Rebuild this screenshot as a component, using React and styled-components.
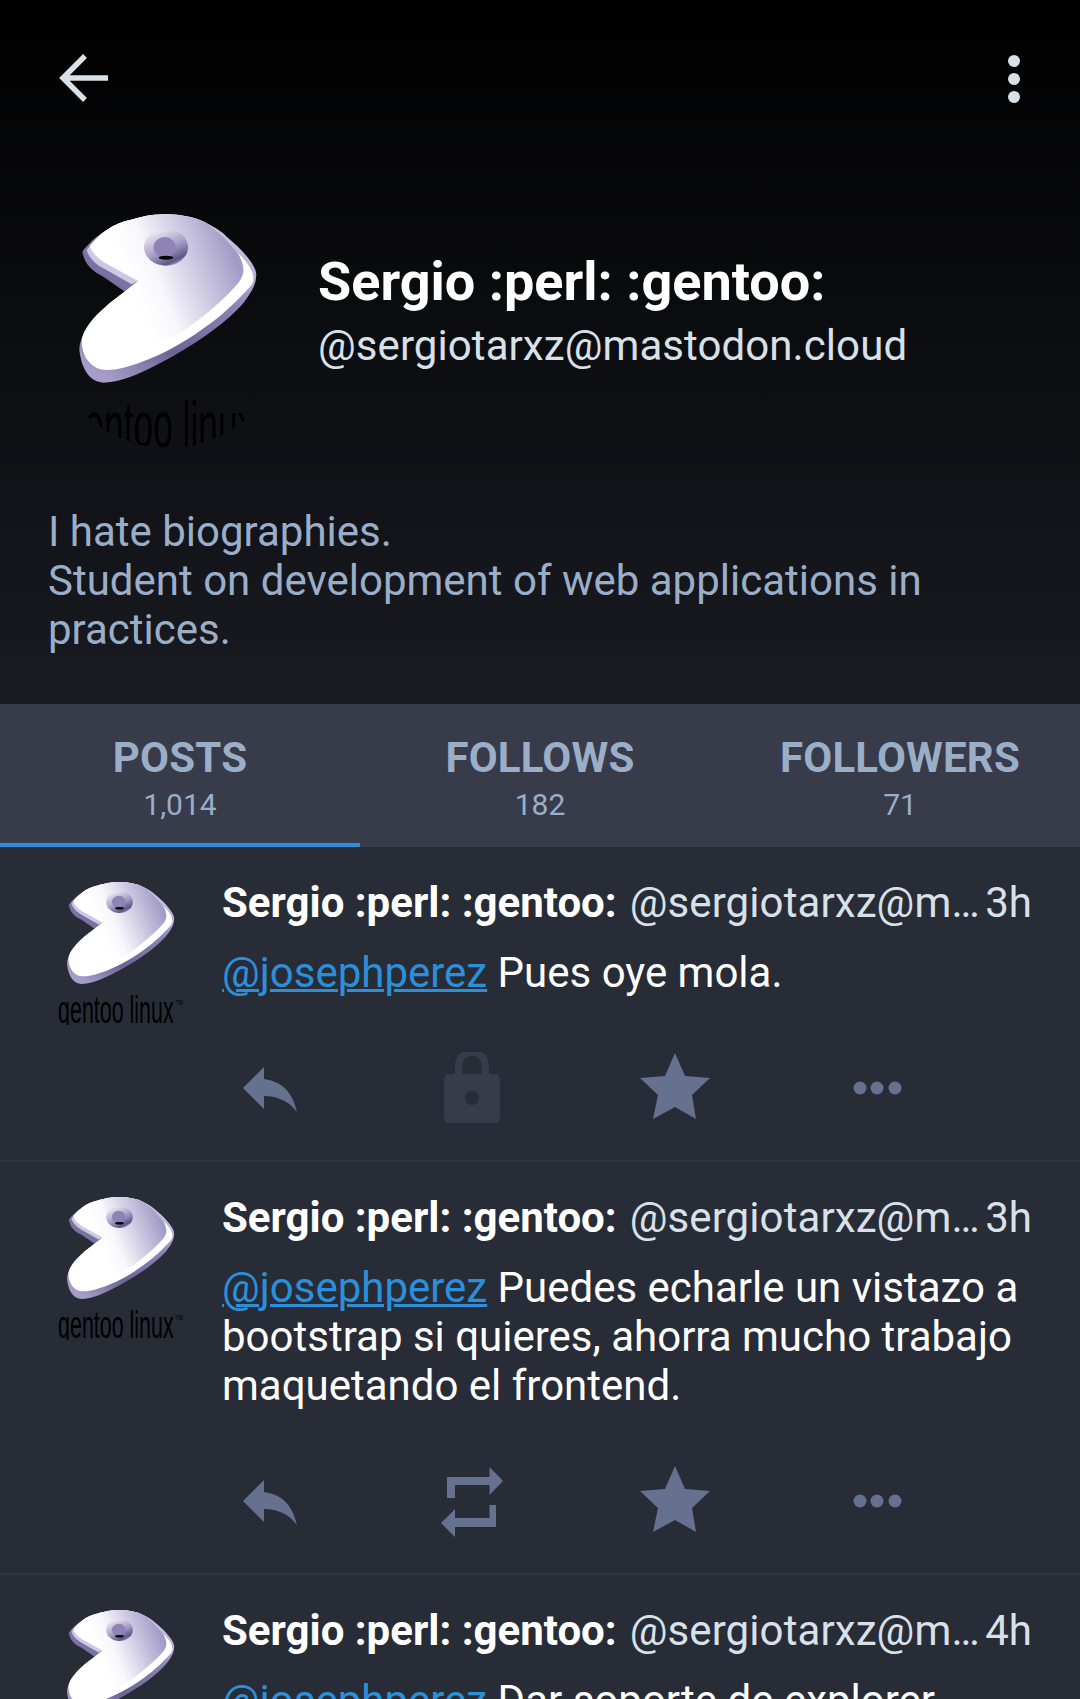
import React from 'react';
import styled, { createGlobalStyle } from 'styled-components';

const Global = createGlobalStyle`
  html, body { margin: 0; padding: 0; background: #282c37; }
  * { box-sizing: border-box; }
  #root { width: 1080px; height: 1699px; overflow: hidden; font-family: Roboto, "Liberation Sans", sans-serif; }
`;

const Page = styled.div`width: 1080px; height: 1699px; overflow: hidden; background: #282c37;`;
const Header = styled.header`
  height: 704px; padding: 0 48px;
  background: linear-gradient(180deg, #000 0%, #191b22 100%);
`;
const TopBar = styled.div`
  height: 208px; padding-top: 48px; display: flex; justify-content: space-between; align-items: flex-start;
`;
const Identity = styled.div`display: flex; align-items: center; gap: 30px;`;
const Names = styled.div`display: flex; flex-direction: column; padding-bottom: 37px;`;
const HeroName = styled.div`font-size: 54px; font-weight: 700; color: #fff; line-height: 63px;`;
const HeroHandle = styled.div`font-size: 42px; color: #d9e1e8; line-height: 49px; margin-top: 8px; letter-spacing: 0.08px;`;
const Bio = styled.p`margin: 59px 0 0; font-size: 42px; line-height: 49px; color: #9baec8;`;

const AvatarBox = styled.div`
  flex: none; width: ${p => p.$size}px; height: ${p => p.$size}px; overflow: hidden;
  border-radius: ${p => (p.$round ? '50%' : '0')};
  margin-top: ${p => (p.$round ? '0' : '3px')};
  svg { display: block; width: 100%; height: 100%; }
`;

const Tabs = styled.nav`display: grid; grid-template-columns: repeat(3, 360px); background: #373b4a; height: 143px;`;
const Tab = styled.div`
  display: flex; flex-direction: column; align-items: center; padding-top: 29px;
  border-bottom: 4px solid ${p => (p.$active ? '#2b90d9' : 'transparent')};
`;
const TabLabel = styled.div`font-size: 42px; font-weight: 700; line-height: 49px; color: #9baec8; letter-spacing: 0.2px;`;
const TabCount = styled.div`font-size: 30px; line-height: 35px; color: #9baec8; margin-top: 5px;`;

const Status = styled.article`
  display: flex; gap: 30px; padding: 31px 48px 36px; border-bottom: 2px solid #313543;
`;
const Body = styled.div`flex: 1; min-width: 0;`;
const NameRow = styled.div`display: flex; font-size: 42px; line-height: 49px; white-space: nowrap;`;
const DisplayName = styled.span`font-weight: 700; color: #fff; flex: none; margin-right: 13px;`;
const Handle = styled.span`flex: 1; min-width: 0; overflow: hidden; text-overflow: ellipsis; color: #d9e1e8; letter-spacing: 0.1px;`;
const Time = styled.span`flex: none; color: #d9e1e8;`;
const Text = styled.p`margin: 21px 0 0; font-size: 42px; line-height: 49px; color: #fff;`;
const Mention = styled.a`color: #2b90d9; text-decoration: underline; text-decoration-thickness: 3px;`;
const Actions = styled.div`display: flex; gap: 94.6px; margin: 55px 0 0 -6.5px;`;
const IconSlot = styled.svg`display: block; flex: none; width: 108px; height: 72px; fill: ${p => p.$color || '#667190'};`;

const faceTop = 'M265 273 L160 215 C140 202 125 185 120 167 C150 130 190 100 240 90 C270 82 300 73 345 73 C390 72 430 82 450 90 C490 105 530 150 560 185';

const GentooLogo = ({ id, view }) => (
  <svg viewBox={view}>
    <defs>
      <linearGradient id={`${id}-d`} x1="0.8" y1="0.1" x2="0.2" y2="1">
        <stop offset="0" stopColor="#c9c4e0" />
        <stop offset="0.3" stopColor="#8c83b4" />
        <stop offset="0.7" stopColor="#6c6494" />
        <stop offset="1" stopColor="#a59dc8" />
      </linearGradient>
      <linearGradient id={`${id}-f`} x1="0.3" y1="0.55" x2="0.95" y2="0.3">
        <stop offset="0" stopColor="#fff" />
        <stop offset="0.25" stopColor="#f8f7fc" />
        <stop offset="1" stopColor="#a39bc7" />
      </linearGradient>
      <linearGradient id={`${id}-h`} x1="0.2" y1="0" x2="0.8" y2="1">
        <stop offset="0" stopColor="#f4f2fa" />
        <stop offset="0.55" stopColor="#a39bc6" />
        <stop offset="0.85" stopColor="#5f5788" />
        <stop offset="1" stopColor="#c9c4e0" />
      </linearGradient>
    </defs>
    <path fill={`url(#${id}-d)`} d="M225 305 L160 260 C125 242 105 225 97 185 C130 140 190 100 240 90 C270 82 300 73 345 73 C390 72 430 85 470 100 C500 115 515 125 530 140 C555 160 580 185 595 205 C612 228 622 245 618 262 C618 285 600 315 575 345 C520 405 430 470 300 535 C250 560 200 578 160 578 C120 575 95 540 88 480 C88 440 120 395 175 343 Z" />
    <path fill="#cdc8e4" d="M265 273 L245 283 L160 235 C135 222 115 200 110 180 L120 167 Z" />
    <path fill="#fff" d={`${faceTop} C585 210 607 235 610 260 C612 275 605 285 600 290 C560 335 530 360 510 378 C450 425 380 475 290 510 C240 530 190 545 150 538 C115 525 95 495 95 450 C100 420 125 385 175 343 Z`} />
    <path fill={`url(#${id}-f)`} d={`${faceTop} C572 200 582 225 580 245 C578 260 570 275 555 290 C490 360 390 440 280 490 C230 510 180 520 145 515 C120 505 110 480 115 450 C125 420 150 385 175 343 Z`} />
    <ellipse cx="348" cy="172" rx="66" ry="55" fill={`url(#${id}-h)`} />
    <ellipse cx="344" cy="172" rx="33" ry="31" fill="#8d84b4" />
    <ellipse cx="348" cy="203" rx="22" ry="6" fill="#000" />
    <text x="44" y="771" fontFamily="'Liberation Sans', sans-serif" fontSize="196" textLength="572" lengthAdjust="spacingAndGlyphs" fill="#000">gentoo linux</text>
    <text x="626" y="680" fontFamily="'Liberation Sans', sans-serif" fontSize="34" textLength="36" lengthAdjust="spacingAndGlyphs" fill="#000">TM</text>
  </svg>
);

const ReplyIcon = () => (
  <IconSlot viewBox="216 1052 108 72">
    <path d="M243 1088 L264 1067 V1079 C285 1082 293 1095 297 1112 C290 1102 278 1096 264 1096 V1109 Z" />
  </IconSlot>
);
const LockIcon = () => (
  <IconSlot viewBox="418 1052 108 72" $color="#373b4a">
    <path fillRule="evenodd" d="M450 1074 H455 V1066 C455 1056 462 1049 472 1049 C482 1049 489 1056 489 1066 V1074 H494 C498 1074 500 1076 500 1080 V1117 C500 1121 498 1123 494 1123 H450 C446 1123 444 1121 444 1117 V1080 C444 1076 446 1074 450 1074 Z M462 1074 H482 V1066 C482 1060 478 1056 472 1056 C466 1056 462 1060 462 1066 Z M472 1091 A7 7 0 1 0 472 1105 A7 7 0 1 0 472 1091 Z" />
  </IconSlot>
);
const RetweetIcon = () => (
  <IconSlot viewBox="418 1052 108 72">
    <path d="M447 1064 H489.5 V1054 L503 1068 L489.5 1082 V1072 H455 V1085 H447 Z" />
    <path d="M496 1092 V1114 H455 V1124 L441 1110 L455 1096 V1105 H489.5 V1092 Z" />
  </IconSlot>
);
const StarIcon = () => (
  <IconSlot viewBox="620 1052 108 72">
    <polygon points="674,1053 684,1076 709,1078 691,1095 695,1119 674,1107 652,1119 657,1095 639,1078 664,1076" />
  </IconSlot>
);
const MoreIcon = () => (
  <IconSlot viewBox="823 1052 108 72">
    <circle cx="860" cy="1088" r="6.5" />
    <circle cx="877" cy="1088" r="6.5" />
    <circle cx="895" cy="1088" r="6.5" />
  </IconSlot>
);

const posts = [
  { id: 'a', time: '3h', text: 'Pues oye mola.', locked: true },
  { id: 'b', time: '3h', text: 'Puedes echarle un vistazo a bootstrap si quieres, ahorra mucho trabajo maquetando el frontend.' },
  { id: 'c', time: '4h', text: 'Dar soporte de explorer' },
];

const tabs = [
  { label: 'POSTS', count: '1,014', active: true },
  { label: 'FOLLOWS', count: '182' },
  { label: 'FOLLOWERS', count: '71' },
];

export default function App() {
  return (
    <Page>
      <Global />
      <Header>
        <TopBar>
          <svg width="60" height="60" viewBox="0 0 60 60" fill="none" stroke="#d9e1e8" strokeWidth="5.5">
            <path d="M15 30 H60 M37 8 L15 30 L37 52" />
          </svg>
          <svg width="24" height="60" viewBox="0 0 24 60" fill="#d9e1e8">
            <circle cx="6" cy="13" r="6" />
            <circle cx="6" cy="31" r="6" />
            <circle cx="6" cy="49" r="6" />
          </svg>
        </TopBar>
        <Identity>
          <AvatarBox $size={240} $round><GentooLogo id="hero" view="-6 54 720 720" /></AvatarBox>
          <Names>
            <HeroName>Sergio :perl: :gentoo:</HeroName>
            <HeroHandle>@sergiotarxz@mastodon.cloud</HeroHandle>
          </Names>
        </Identity>
        <Bio>I hate biographies.<br />Student on development of web applications in practices.</Bio>
      </Header>
      <Tabs>
        {tabs.map(t => (
          <Tab key={t.label} $active={t.active}>
            <TabLabel>{t.label}</TabLabel>
            <TabCount>{t.count}</TabCount>
          </Tab>
        ))}
      </Tabs>
      {posts.map(p => (
        <Status key={p.id}>
          <AvatarBox $size={144}><GentooLogo id={p.id} view="-6 68 713 713" /></AvatarBox>
          <Body>
            <NameRow>
              <DisplayName>Sergio :perl: :gentoo:</DisplayName>
              <Handle>@sergiotarxz@mastodon.cloud</Handle>
              <Time>{p.time}</Time>
            </NameRow>
            <Text><Mention>@josephperez</Mention> {p.text}</Text>
            <Actions>
              <ReplyIcon />
              {p.locked ? <LockIcon /> : <RetweetIcon />}
              <StarIcon />
              <MoreIcon />
            </Actions>
          </Body>
        </Status>
      ))}
    </Page>
  );
}
